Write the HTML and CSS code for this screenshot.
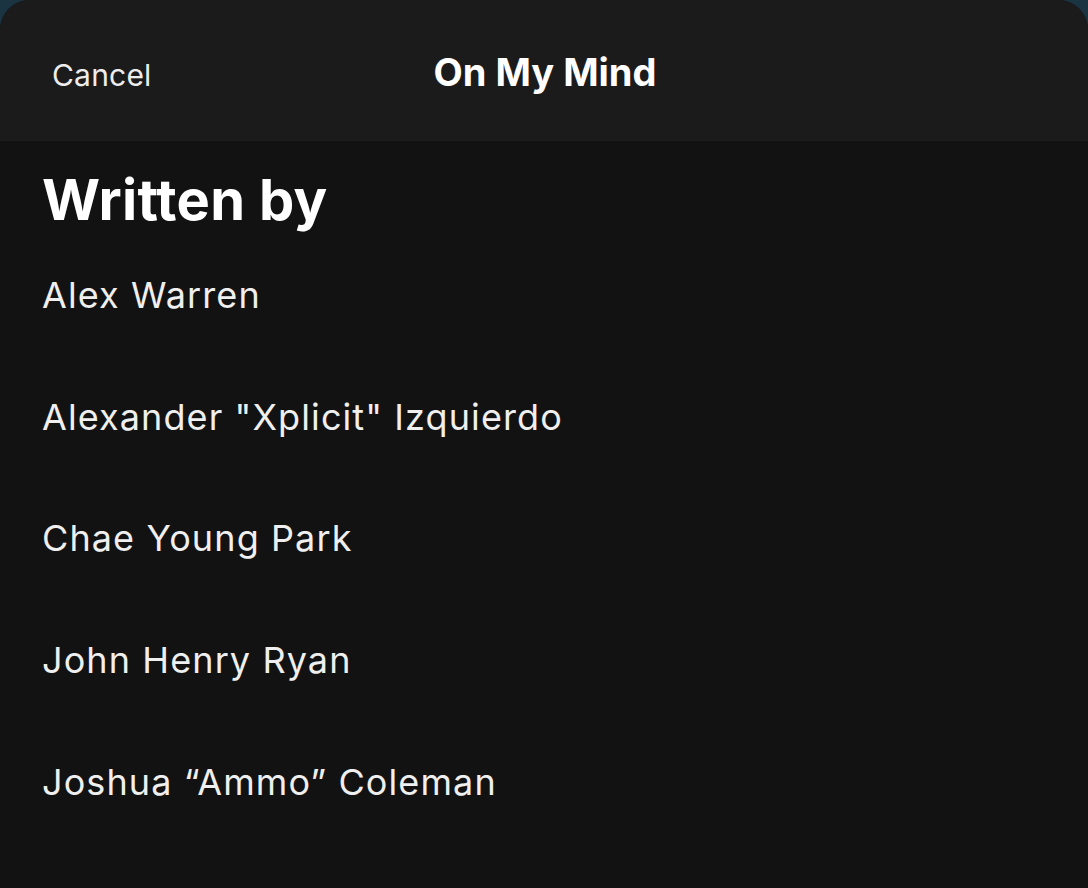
FILE: index.html
```html
<!DOCTYPE html>
<html lang="en">
<head>
<meta charset="utf-8">
<title>On My Mind - Credits</title>
<link rel="stylesheet" href="styles.css">
</head>
<body>
<div class="sheet">
  <header class="sheet-header">
    <button class="cancel">Cancel</button>
    <h1 class="title">On My Mind</h1>
  </header>
  <main class="credits">
    <h2 class="section-title">Written by</h2>
    <ul class="names">
      <li>Alex Warren</li>
      <li>Alexander "Xplicit" Izquierdo</li>
      <li>Chae Young Park</li>
      <li>John Henry Ryan</li>
      <li>Joshua “Ammo” Coleman</li>
    </ul>
  </main>
</div>
</body>
</html>
```

FILE: styles.css
```css
* { box-sizing: border-box; }
html, body { margin: 0; padding: 0; }
body {
  width: 1088px;
  height: 888px;
  overflow: hidden;
  background: #1a3442;
  font-family: Inter, "Noto Sans", "Liberation Sans", sans-serif;
  color: #f2f2f2;
}
.sheet {
  height: 888px;
  border-radius: 30px 30px 0 0;
  overflow: hidden;
  background: #121212;
  display: flex;
  flex-direction: column;
}
.sheet-header {
  height: 141px;
  background: #1b1b1b;
  display: flex;
  align-items: center;
  justify-content: center;
  position: relative;
}
.cancel {
  position: absolute;
  left: 52px;
  top: 57px;
  background: none;
  border: 0;
  padding: 0;
  font-family: inherit;
  font-size: 30px;
  letter-spacing: 0.2px;
  color: #ededed;
  line-height: 36px;
}
.title {
  margin: 0 0 0 2px;
  padding-top: 2px;
  font-size: 38px;
  font-weight: 700;
  letter-spacing: 0;
  color: #ffffff;
}
.credits {
  padding: 21px 0 0 42px;
}
.section-title {
  margin: 0;
  font-size: 56px;
  font-weight: 700;
  letter-spacing: 0.3px;
  line-height: 76px;
  color: #ffffff;
}
.names {
  list-style: none;
  margin: 0;
  padding: 0;
}
.names li {
  height: 121.7px;
  padding-bottom: 8px;
  display: flex;
  align-items: center;
  font-size: 36px;
  letter-spacing: 1.1px;
  color: #efefef;
}
```
